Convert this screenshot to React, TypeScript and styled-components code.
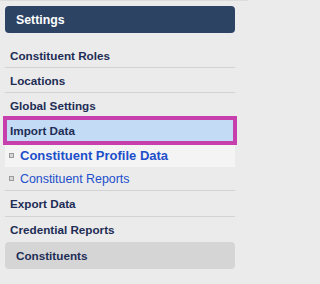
import React from "react";
import styled, { createGlobalStyle } from "styled-components";

const Global = createGlobalStyle`
  html, body { margin: 0; padding: 0; }
  body {
    background: #ebebeb;
    font-family: "Liberation Sans", Arial, sans-serif;
    -webkit-font-smoothing: antialiased;
  }
`;

const Page = styled.div`
  width: 248px;
  height: 284px;
  box-sizing: border-box;
  border-top: 1px solid #dcdcdc;
  padding: 5px 13px 0 5px;
  background: #ebebeb;
`;

const Header = styled.div`
  height: 27px;
  display: flex;
  align-items: center;
  padding-left: 11px;
  background: #2c4364;
  border-radius: 4px;
  color: #ffffff;
  font-weight: bold;
  font-size: 12.3px;
`;

const Menu = styled.ul`
  list-style: none;
  margin: 10px 0 0;
  padding: 0;
`;

const Item = styled.li<{ $last?: boolean; $tall?: boolean }>`
  height: ${(p) => (p.$tall ? 25 : 24)}px;
  display: flex;
  align-items: center;
  padding-left: 5px;
  border-bottom: 1px solid ${(p) => (p.$last ? "transparent" : "#d3d3d3")};
  color: #1e2d55;
  font-weight: bold;
  font-size: 11.7px;
`;

const ActiveItem = styled.li`
  height: 25px;
  box-sizing: border-box;
  display: flex;
  align-items: center;
  padding-left: 4px;
  background: #c3dbf5;
  border: 1px solid #a5bfdc;
  outline: 4px solid #c73fad;
  outline-offset: -2px;
  color: #1e2d55;
  font-weight: bold;
  font-size: 11.7px;
`;

const SubList = styled.ul`
  list-style: none;
  margin: 0;
  padding: 0;
  border-bottom: 1px solid #d3d3d3;
`;

const SubItem = styled.li<{ $current?: boolean }>`
  height: ${(p) => (p.$current ? 24 : 23)}px;
  display: flex;
  align-items: center;
  gap: 6px;
  padding-left: 4px;
  background: ${(p) => (p.$current ? "#f4f4f4" : "transparent")};
  color: #1d4fcb;
  font-weight: ${(p) => (p.$current ? "bold" : "normal")};
  font-size: ${(p) => (p.$current ? "13px" : "12.4px")};
`;

const Bullet = styled.span`
  width: 3px;
  height: 3px;
  border: 1px solid #9a9a9a;
  background: #d8d8d8;
  flex: none;
`;

const Section = styled.div`
  height: 27px;
  display: flex;
  align-items: center;
  padding-left: 11px;
  background: #d5d5d5;
  border-radius: 4px;
  color: #1e2d55;
  font-weight: bold;
  font-size: 11.7px;
`;

export default function App() {
  return (
    <>
      <Global />
      <Page>
        <Header>Settings</Header>
        <Menu>
          <Item>Constituent Roles</Item>
          <Item>Locations</Item>
          <Item $last>Global Settings</Item>
          <ActiveItem>Import Data</ActiveItem>
          <SubList>
            <SubItem $current>
              <Bullet />
              Constituent Profile Data
            </SubItem>
            <SubItem>
              <Bullet />
              Constituent Reports
            </SubItem>
          </SubList>
          <Item $tall>Export Data</Item>
          <Item $last>Credential Reports</Item>
        </Menu>
        <Section>Constituents</Section>
      </Page>
    </>
  );
}
